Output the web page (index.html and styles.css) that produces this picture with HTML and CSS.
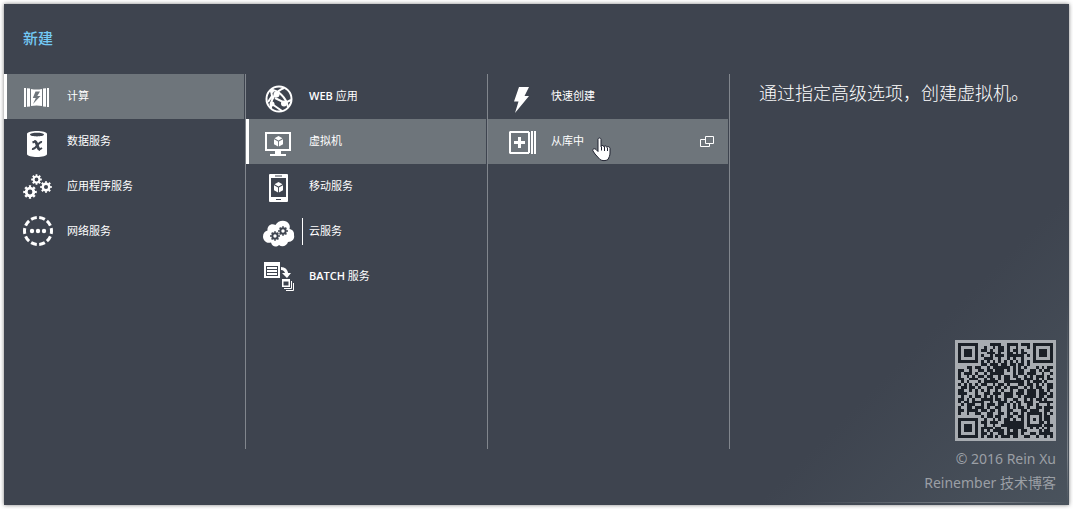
FILE: index.html
```html
<!DOCTYPE html>
<html lang="zh-CN">
<head>
  <meta charset="UTF-8">
  <meta name="viewport" content="width=device-width, initial-scale=1.0">
  <title>新建</title>
  <link rel="stylesheet" href="styles.css">
</head>
<body>
  <!-- shared shapes -->
  <svg class="defs" aria-hidden="true">
    <symbol id="gear" viewBox="-7 -7 14 14">
      <circle r="3.8" fill="none" stroke="currentColor" stroke-width="2.8"/>
      <circle r="5.6" fill="none" stroke="currentColor" stroke-width="2.4" pathLength="16" stroke-dasharray="1 1" stroke-dashoffset="0.5"/>
    </symbol>
    <symbol id="cube" viewBox="0 0 10 12">
      <path fill="currentColor" d="M5 0 9.4 2.4 5 4.9.6 2.4zM0 3.4 4.5 6v5.6L0 9zM10 3.4 5.5 6v5.6L10 9z"/>
    </symbol>
  </svg>

  <main class="drawer">
    <h1>新建</h1>
    <div class="columns">
      <ul class="menu">
        <li><button type="button" class="item selected">
          <svg class="icon" viewBox="0 0 32 32"><path d="M3 6h2v19H3zM6 6.3l3 .3v17.8l-3 .3zM22 6.6l3-.3v18.4l-3-.3zM26 6h2v19h-2z"/><path fill-rule="evenodd" d="M10 7q5.5 1 11 0v17q-5.500-1-11 0zM14.500 9.500 11.800 16h3L12 22l7.500-8h-3.200l2.700-4.500z"/></svg>
          <span>计算</span></button></li>
        <li><button type="button" class="item">
          <svg class="icon" viewBox="0 0 32 32"><path fill-rule="evenodd" d="M6 7c0-4 20-4 20 0v20c0 4-20 4-20 0zM9 7.500c0 2.500 14 2.500 14 0s-14-2.500-14 0z"/><path class="cut-line thick" d="M13.500 14.500c3-.5 2.500 8 5.500 8"/><path class="cut-line" d="M11.500 15.500l2.500-1M18.500 22.500l2.500-1.500M21 15c-4-1-5.500 8-10 7"/></svg>
          <span>数据服务</span></button></li>
        <li><button type="button" class="item">
          <svg class="icon" viewBox="0 0 32 32"><use href="#gear" x="10" y="2" width="11" height="11"/><use href="#gear" x="2" y="13" width="14" height="14"/><use href="#gear" x="19" y="9" width="12" height="12"/></svg>
          <span>应用程序服务</span></button></li>
        <li><button type="button" class="item">
          <svg class="icon" viewBox="0 0 32 32"><circle class="line-3" cx="17" cy="14" r="13.5" pathLength="100" stroke-dasharray="7 3" stroke-dashoffset="3.5"/><circle cx="11" cy="14" r="2.2"/><circle cx="17" cy="14" r="2.2"/><circle cx="23" cy="14" r="2.2"/></svg>
          <span>网络服务</span></button></li>
      </ul>

      <ul class="menu">
        <li><button type="button" class="item">
          <svg class="icon" viewBox="0 0 32 32"><circle class="line-2" cx="16" cy="17" r="12.500"/><path class="line-2" d="M8 8c7 0 15 7 17 17M21 6c-8 3-14 12-13 20M12 16l10 5 6-3M8 8l1 6-4 6M9 22l10 7"/><circle cx="13.5" cy="12.5" r="3"/><circle cx="21" cy="21.5" r="3"/><circle cx="9" cy="22" r="2.5"/><circle cx="9" cy="9" r="2"/></svg>
          <span><b>WEB</b> 应用</span></button></li>
        <li><button type="button" class="item selected">
          <svg class="icon" viewBox="0 0 32 32"><path fill-rule="evenodd" d="M2 5h26v19H2zM4 7v15h22V7zM12 24h6v3h5v2H7v-2h5z"/><use href="#cube" x="11" y="9" width="9" height="11"/></svg>
          <span>虚拟机</span></button></li>
        <li><button type="button" class="item">
          <svg class="icon" viewBox="0 0 32 32"><path fill-rule="evenodd" d="M7 2h17q1 0 1 1v26q0 1-1 1H7q-1 0-1-1V3q0-1 1-1zM8 6v19h15V6zM12 3.500v1h7v-1zM13 27v1h5v-1z"/><use href="#cube" x="11" y="10" width="9" height="11"/></svg>
          <span>移动服务</span></button></li>
        <li><button type="button" class="item divided">
          <svg class="icon" viewBox="0 0 32 32"><path d="M8 25.500C3 27 0 23 0 19.500 0 16 2 14 4.500 13.500 4 9 8 6 12.500 8 15 3 23 2 26 7c1 1.500 1 3.500.500 5 3 .500 5 3 4.500 6 1 4-2 7-6 7-1 4-6 5.500-9 3-3 3-7 1.500-8-2.500z"/><g class="cut"><use href="#gear" x="7" y="14" width="10" height="10"/><use href="#gear" x="15" y="9" width="10" height="10"/></g></svg>
          <span>云服务</span></button></li>
        <li><button type="button" class="item">
          <svg class="icon" viewBox="0 0 32 32"><path fill-rule="evenodd" d="M1 0h16v16H1zM3 4v10h12V4zM4 5h10v2H4zM4 8h10v2H4zM4 11h10v2H4z"/><path class="line-3" d="M18 6.500q5 0 6 6"/><path d="M19 11h9l-4 5zM19 17h8v8h-8zM20.500 19.500v4h5v-4z" fill-rule="evenodd"/><path class="line-1" d="M28.500 19v7.500H21M30.500 21v7.500H23"/></svg>
          <span><b>BATCH</b> 服务</span></button></li>
      </ul>

      <ul class="menu">
        <li><button type="button" class="item">
          <svg class="icon" viewBox="0 0 32 32"><path d="M14 5h10l-4.500 9H24L10 31l3.500-11.500H9z"/></svg>
          <span>快速创建</span></button></li>
        <li><button type="button" class="item hovered">
          <svg class="icon" viewBox="0 0 32 32"><path fill-rule="evenodd" d="M5 4h19v1h1v21h-1v1H5l-1-1V5zM6 6v19h17V6zM13 10h3v4h4v3h-4v4h-3v-4H9v-3h4zM26 4h2v23h-2zM29 4h2v23h-2z"/></svg>
          <span>从库中</span>
          <svg class="popout" viewBox="0 0 14 12"><path d="M5.500.500h8v7h-8zM5 3.500H.500v7h9V8"/></svg>
          <svg class="pointer" viewBox="0 0 20 25"><path d="M6 2.500C6 .500 9 .500 9 2.500v7C9 8 12 8 12 10c0-1.500 3-1.500 3 .500 0-1.500 3-1 3 1V16c0 3-1 4-2 6.500-2 1.500-6 1.500-8 0L3 17l-2-3c-1-2 1.500-3 3-1.500l2 2z"/><path d="M9.500 9.500v4M12.500 10v4M15.500 11v3"/></svg>
        </button></li>
      </ul>

      <section class="detail">
        <p>通过指定高级选项，创建虚拟机。</p>
        <footer>
          <svg class="qr" viewBox="-1 -1 35 35" role="img" aria-label="Reinember"><path id="qr-modules"/></svg>
          <small>© 2016 Rein Xu</small>
          <small>Reinember 技术博客</small>
        </footer>
      </section>
    </div>
  </main>
  <script src="qr.js"></script>
</body>
</html>
```
FILE: styles.css
```css
:root {
  --bg: #3e444f;
  --active: #6e757b;
  --line: #81868d;
  --accent: #73c9f5;
}
* {
  box-sizing: border-box;
}
body {
  margin: 0;
  padding: 4px;
  background-color: #fff;
  font-family: "Open Sans", "Noto Sans CJK SC", sans-serif;
  color: #fff;
}
.defs {
  display: none;
}
.drawer {
  display: flex;
  flex-direction: column;
  min-height: calc(100vh - 8px);
  background:
    linear-gradient(to right, transparent 75%, #7d838a 92%, transparent) bottom 2px left 0 / 100% 1px no-repeat,
    linear-gradient(to bottom, transparent 60%, #7d838a 90%, transparent) top 0 right 1px / 1px 100% no-repeat,
    linear-gradient(135deg, transparent 80%, #4a535d) var(--bg);
  box-shadow: 0 0 4px rgba(0, 0, 0, 0.5);
}
h1 {
  margin: 0;
  padding: 23px 19px 25px;
  font-size: 15px;
  line-height: 22px;
  font-weight: 500;
  color: var(--accent);
}
.columns {
  flex: 1;
  display: grid;
  grid-template-columns: repeat(3, minmax(150px, 242px)) 1fr;
}
.menu {
  align-self: start;
  min-height: 375px;
  margin: 0;
  padding: 0 1px 0 0;
  list-style: none;
  border-right: 1px solid var(--line);
}
.item {
  position: relative;
  display: flex;
  align-items: center;
  gap: 14px;
  width: 100%;
  height: 45px;
  padding: 0 14px 1px 17px;
  border: 0;
  background: none;
  color: inherit;
  font-family: inherit;
  font-size: 11px;
  font-weight: 400;
  line-height: 16px;
  text-align: left;
  cursor: pointer;
}
.item span {
  position: relative;
}
.item b {
  font-weight: 600;
}
.selected,
.hovered,
.item:hover {
  background-color: var(--active);
}
.selected {
  box-shadow: inset 3px 0 #fff;
}
.divided span::before {
  content: "";
  position: absolute;
  left: -7px;
  top: -5px;
  width: 1px;
  height: 27px;
  background-color: #fff;
}

/* icons */
.icon {
  flex: none;
  width: 32px;
  height: 32px;
  margin-top: 4px;
  overflow: visible;
  fill: #fff;
}
.icon .line-1,
.icon .line-2,
.icon .line-3 {
  fill: none;
  stroke: #fff;
}
.line-1 { stroke-width: 1; }
.line-2 { stroke-width: 2; }
.line-3 { stroke-width: 3; }
.cut {
  color: var(--bg);
}
.icon .cut-line {
  fill: none;
  stroke: var(--bg);
  stroke-width: 2;
}
.icon .thick {
  stroke-width: 3;
}
.popout {
  width: 14px;
  height: 12px;
  margin-left: auto;
  margin-top: 2px;
  fill: none;
  stroke: #fff;
}
.pointer {
  position: absolute;
  left: 104px;
  top: 18px;
  width: 20px;
  height: 25px;
  fill: #fff;
  stroke: #1f2230;
}

/* right side */
.detail {
  display: flex;
  flex-direction: column;
  justify-content: space-between;
  padding: 5px 13px 10px 29px;
}
.detail p {
  margin: 0;
  font-family: "Noto Sans CJK SC", sans-serif;
  font-size: 18px;
  line-height: 26px;
  font-weight: 300;
}
footer {
  display: flex;
  flex-direction: column;
  align-items: flex-end;
  color: #9b9fa5;
}
footer small {
  font-family: "Noto Sans", "Noto Sans CJK SC", sans-serif;
  font-size: 14px;
  line-height: 24px;
}
.qr {
  width: 101px;
  height: 101px;
  margin-bottom: 6px;
  background-color: #a8acb1;
  fill: #1b2027;
  shape-rendering: crispEdges;
}
```
FILE: qr.js
```js
const rows = [
  "#######....####..####.###.#######",
  "#.....#..#..#.##.#..#...#.#.....#",
  "#.###.#.##.#..##.#.##.#...#.###.#",
  "#.###.#...###.#..##.#.##..#.###.#",
  "#.###.#.#..#.###.######.#.#.###.#",
  "#.....#..###..#..#.#..#...#.....#",
  "#######.#.#.#.#.#.#.#.#.#.#######",
  "........##.###.##.##.##.#........",
  "...##.##..#.######.#.#.#...#.#.##",
  "##..#..##.##.###.#.#.##..##.#.##.",
  "#.###.#..#.#####...#.##.###..#..#",
  "#..#.#.##.##..#.##.##..#.#.###.#.",
  "##..###..#.##.#.##..##.###.#.#.##",
  ".#.#...#.#####..#######.#.###.#..",
  "#.#.#.#.##..#.##.#...##.##.#.#.##",
  ".##.##.#..##.##.#.###..#.#.##..##",
  "##..#.#.#.#..#.#..#..##.###.##.#.",
  "###...#..##.###.###.###.###.###.#",
  ".#..#.##.#.#.#..###..#.####.##.##",
  "##.#.#..####.##.#..##..#.#.##.#..",
  "#.##.####..#..###.#.##.###..#####",
  ".#.###..#.###.##.#.#.#..##.#...#.",
  "#..##.###.#..##..#.#.##.#..##.###",
  "##.####.##.##.#..##...##.###..##.",
  "#..#..##..##..##.#.##.#.#####.#.#",
  "........#.##.##..##..##.#...#.##.",
  "#######..#..#.#.##.#..#.#.#.#.##.",
  "#.....#.##.###..#######.#...##.#.",
  "#.###.#..#..#..########.#####.###",
  "#.###.#.####.##..######..#.#.#.#.",
  "#.###.#.#.#.####.#.##.##....#.##.",
  "#.....#.##.#..##.####.#..##.#####",
  "#######.#.##.#.###.##..##..#..#.#"
];

let d = "";
rows.forEach((row, y) => {
  [...row].forEach((cell, x) => {
    if (cell === "#") d += `M${x} ${y}h1v1h-1z`;
  });
});
document.getElementById("qr-modules").setAttribute("d", d);
```
